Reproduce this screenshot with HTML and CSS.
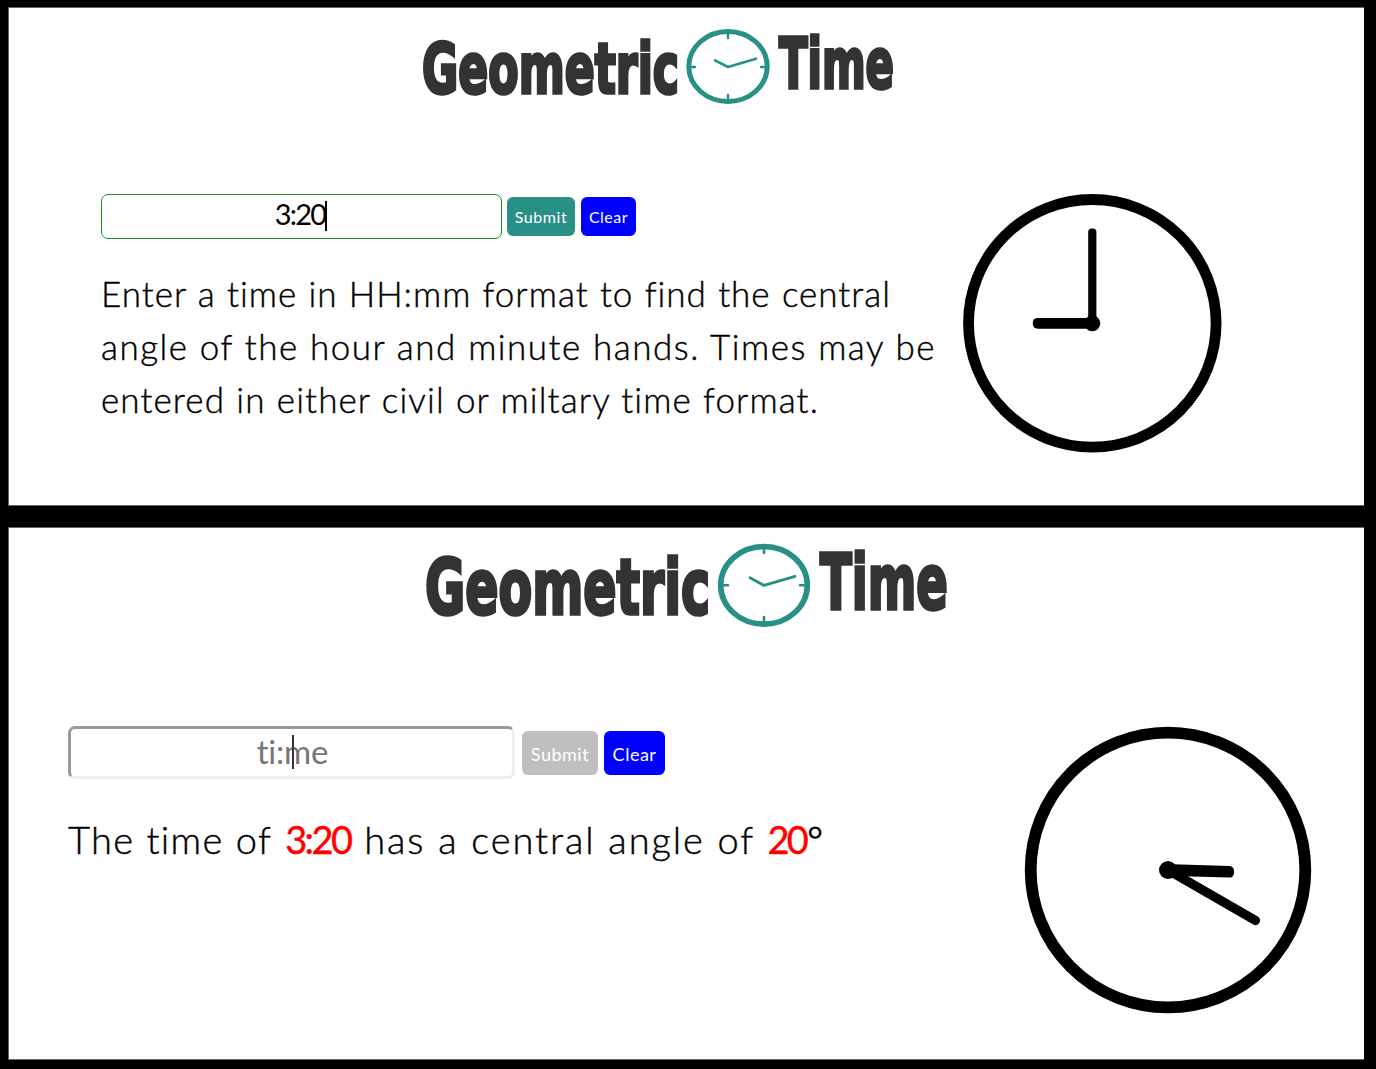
FILE: index.html
```html
<!DOCTYPE html>
<html lang="en">
<head>
<meta charset="utf-8">
<title>Geometric Time</title>
<link rel="stylesheet" href="styles.css">
</head>
<body>
<section class="panel panel-entry">
  <header class="logo">
    <svg width="480" height="84" viewBox="418 24 480 84" role="img" aria-label="Geometric Time">
      <g class="logo-text">
        <text x="422" y="92.5" textLength="257" lengthAdjust="spacingAndGlyphs">Geometric</text>
        <text x="779" y="87.5" textLength="115" lengthAdjust="spacingAndGlyphs">Time</text>
      </g>
      <g class="logo-clock">
        <ellipse cx="728" cy="66.5" rx="39.2" ry="35" stroke-width="5"/>
        <path stroke-width="2.4" d="M728 33v5M728 95v5M690 67h5M761 67h5"/>
        <path stroke-width="2.6" d="M715 60.3l13 6.7 28-8.3"/>
      </g>
    </svg>
  </header>
  <main class="content">
    <div class="copy">
      <form class="controls">
        <div class="field valid"><span class="value">3:20</span><i class="caret"></i></div>
        <button type="button" class="submit">Submit</button>
        <button type="button" class="clear">Clear</button>
      </form>
      <p class="message">
        <span class="line line-one">Enter a time in HH:mm format to find the central</span>
        <span class="line line-two">angle of the hour and minute hands. Times may be</span>
        <span class="line line-three">entered in either civil or miltary time format.</span>
      </p>
    </div>
    <svg class="clock" width="260" height="260" viewBox="-130.3 -130.3 260 260">
      <circle r="123.8" fill="none" stroke="#000" stroke-width="10.8"/>
      <rect x="-4.1" y="-94.7" width="8.2" height="95" rx="3.5"/>
      <rect x="-59.5" y="-5.4" width="60" height="10.8" rx="4.8"/>
      <circle r="8"/>
    </svg>
  </main>
</section>
<section class="panel panel-result">
  <header class="logo">
    <svg width="530" height="90" viewBox="422 540 530 90" role="img" aria-label="Geometric Time">
      <g class="logo-text large">
        <text x="425" y="613.5" textLength="285" lengthAdjust="spacingAndGlyphs">Geometric</text>
        <text x="820" y="608.5" textLength="128" lengthAdjust="spacingAndGlyphs">Time</text>
      </g>
      <g class="logo-clock">
        <ellipse cx="764" cy="585.3" rx="43.3" ry="38.8" stroke-width="5.6"/>
        <path stroke-width="2.6" d="M764 548v5M764 617v5M722 585.3h6M800 585.3h6"/>
        <path stroke-width="2.8" d="M750 577.7l14 7.7 31-9"/>
      </g>
    </svg>
  </header>
  <main class="content">
    <div class="copy">
      <form class="controls">
        <div class="field"><span class="placeholder">ti:<i class="caret"></i>me</span></div>
        <button type="button" class="submit" disabled>Submit</button>
        <button type="button" class="clear">Clear</button>
      </form>
      <p class="message"><span class="line line-result"><span class="lead">The time of</span> <b>3:20</b> has a central angle of <span class="angle"><b>20</b><span class="degree">°</span></span></span></p>
    </div>
    <svg class="clock" width="288" height="288" viewBox="-144 -144 288 288">
      <circle r="137.3" fill="none" stroke="#000" stroke-width="11.8"/>
      <rect x="0" y="-5.8" width="66" height="11.6" rx="4.5" transform="rotate(1.7)"/>
      <rect x="0" y="-4.6" width="105.5" height="9.2" rx="4.4" transform="rotate(30)"/>
      <circle r="9"/>
    </svg>
  </main>
</section>
</body>
</html>
```

FILE: styles.css
```css
* { box-sizing: border-box; }
body {
  margin: 0;
  height: 1069px;
  padding: 7px 12px 9px 8px;
  background: #000;
  color: #000;
  font-family: Lato, "Open Sans", sans-serif;
  font-weight: 300;
  display: flex;
  flex-direction: column;
  gap: 21px;
}
.panel {
  background: #fff;
  border: 1px solid #666;
  border-right: 0;
}
.panel-entry { height: 499px; }
.panel-result { height: 533px; }
.logo svg { display: block; overflow: visible; }
.panel-entry .logo { padding: 16px 0 0 409px; }
.panel-result .logo { padding: 12px 0 0 413px; }
.logo-text {
  font: 700 69px "DejaVu Sans", sans-serif;
  font-kerning: none;
  fill: #333;
  stroke: #333;
  stroke-width: 3.6px;
}
.logo-text.large { font-size: 76px; }
.logo-clock {
  fill: none;
  stroke: #289085;
  stroke-linecap: round;
  stroke-linejoin: round;
}
.content { display: flex; align-items: flex-start; }
.panel-entry .content { padding: 85px 0 0 92px; }
.panel-result .content { padding: 96px 0 0 59px; }
.copy { flex: none; }
.panel-entry .copy { width: 861px; }
.panel-result .copy { width: 956px; }
.controls { display: flex; align-items: center; }
.panel-entry .controls { margin-top: 1px; height: 45px; }
.panel-result .controls { height: 53px; }
.field {
  height: 45px;
  width: 401px;
  border-radius: 7px;
  display: flex;
  justify-content: center;
}
.field.valid {
  border: 1.5px solid #1c921c;
  font-size: 29px;
  line-height: 38px;
  font-weight: 400;
  padding-right: 1px;
}
.value { letter-spacing: -1.8px; }
.caret { background: #000; width: 2px; height: 30px; margin-top: 6px; }
.panel-result .field {
  width: 447px;
  height: 53px;
  border: 3px solid;
  border-color: #999 #eee #eee #999;
  color: #767676;
  font-size: 33px;
  line-height: 44px;
  font-weight: 400;
  font-variant-ligatures: none;
}
.placeholder { position: relative; letter-spacing: -0.2px; padding-left: 2px; }
.panel-result .caret {
  position: absolute;
  left: 37px;
  top: 6px;
  height: 34px;
  margin: 0;
  background: #333;
}
button {
  border: 0;
  padding: 0;
  border-radius: 6px;
  color: #fff;
  font: 400 16px Lato, sans-serif;
  height: 39px;
}
.submit { width: 68px; margin-left: 5px; background: #289085; letter-spacing: 0.6px; }
.clear { width: 55px; margin-left: 6px; background: #00f; letter-spacing: 0.5px; }
.panel-result button { height: 44px; font-size: 18px; padding-top: 2px; }
.panel-result .submit { width: 76px; margin-left: 7px; background: #bfbfbf; letter-spacing: 0.5px; }
.panel-result .clear { width: 61px; }
.message {
  margin: 28px 0 0;
  font-size: 35px;
  line-height: 53px;
  -webkit-text-stroke: 0.4px currentColor;
}
.line {
  display: block;
  text-align: justify;
  text-align-last: justify;
}
.line-one { width: 790px; letter-spacing: 1px; }
.line-two { width: 835px; letter-spacing: 1.5px; }
.line-three { width: 718px; letter-spacing: 1.1px; }
.panel-result .message { font-size: 38px; margin-top: 34px; }
.line-result { width: 755px; letter-spacing: 1.9px; }
.lead { letter-spacing: 1.3px; }
.message b {
  color: #f00;
  font-weight: 400;
  letter-spacing: -2.6px;
  margin-right: 1px;
}
.angle { white-space: nowrap; }
.degree { font-weight: 300; letter-spacing: 0; -webkit-text-stroke-width: 1px; }
.clock { flex: none; display: block; }
```
